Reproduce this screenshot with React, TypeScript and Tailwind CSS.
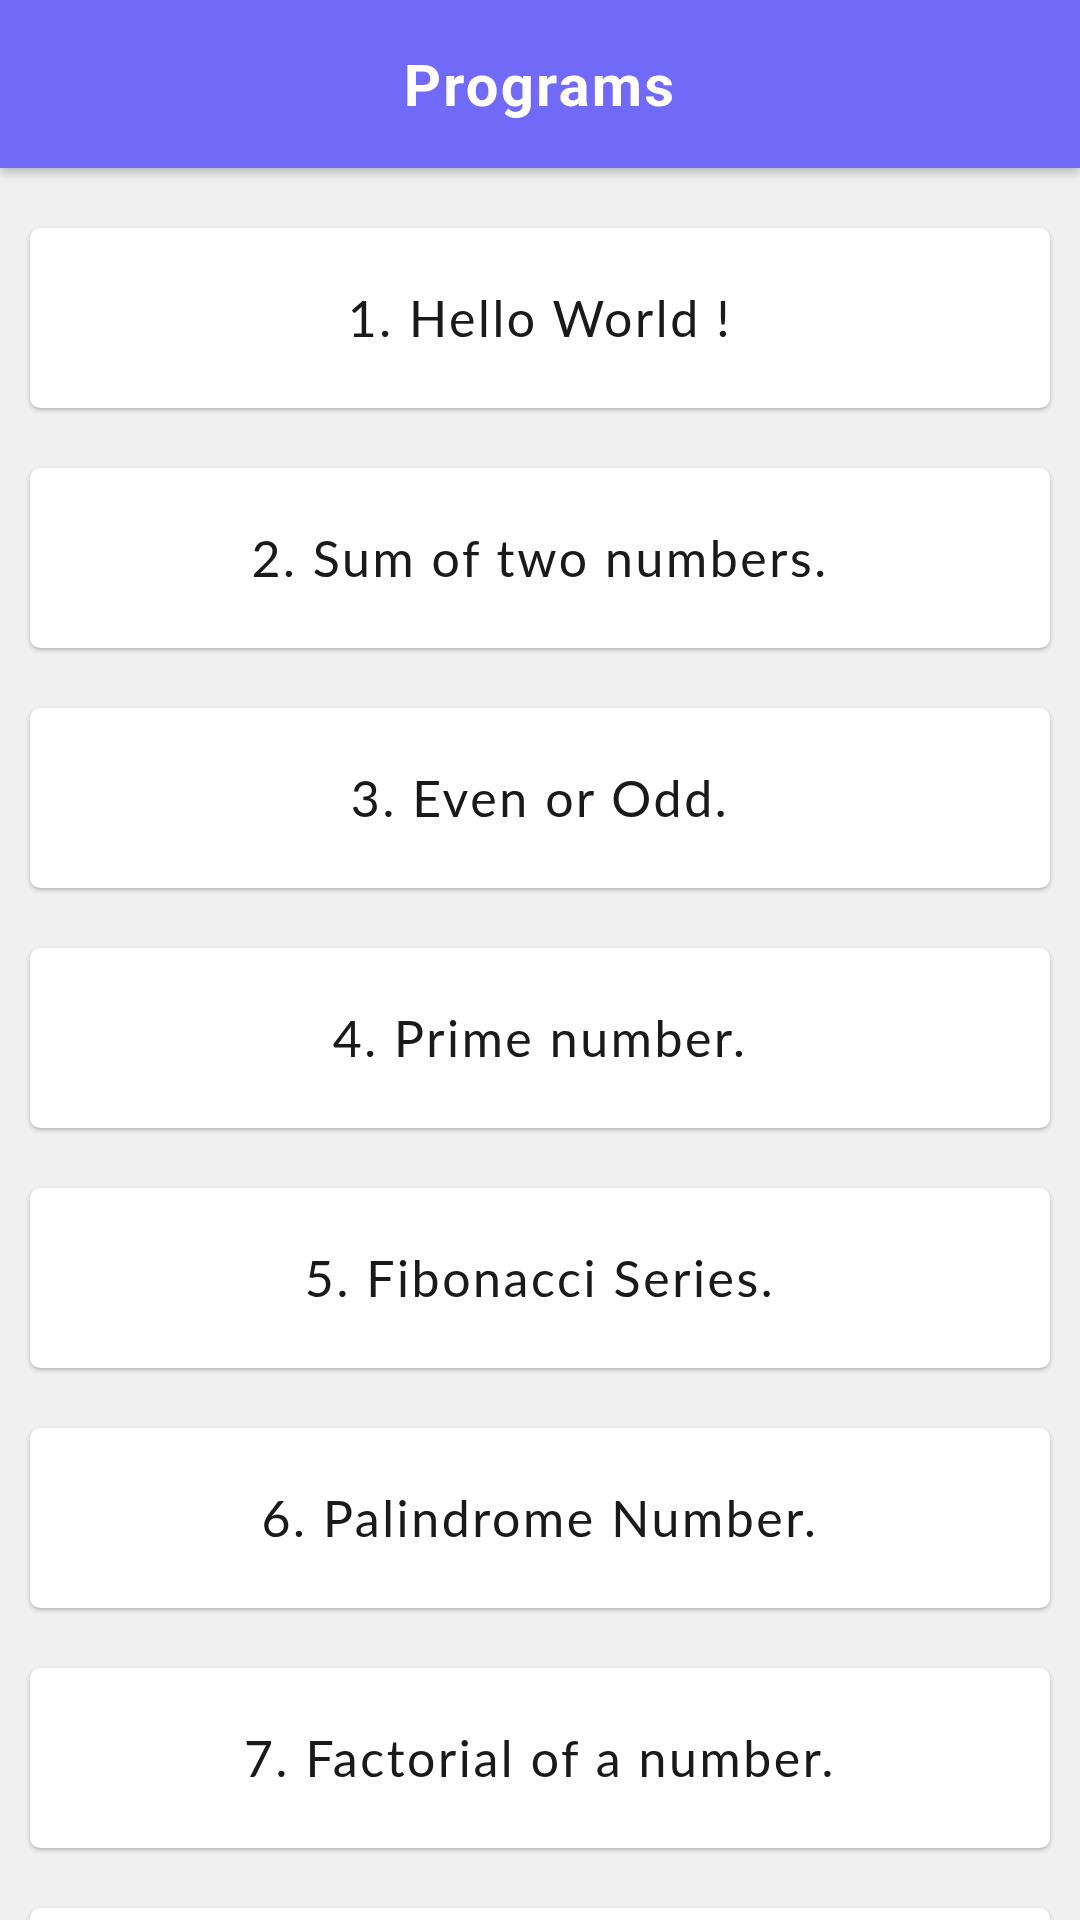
const programs = [
  '1. Hello World !',
  '2. Sum of two numbers.',
  '3. Even or Odd.',
  '4. Prime number.',
  '5. Fibonacci Series.',
  '6. Palindrome Number.',
  '7. Factorial of a number.',
  '8. Reverse a number.',
];

export default function App() {
  return (
    <div className="flex h-[1920px] w-[1080px] flex-col overflow-hidden bg-[#f0f0f0]">
      <header className="relative z-10 flex h-[168px] shrink-0 items-center justify-center bg-[#7169f8] pt-[4px] shadow-[0_4px_10px_rgba(0,0,0,0.25)]">
        <h1 className="font-['Roboto',sans-serif] text-[58px] font-bold tracking-[2.2px] text-white">
          Programs
        </h1>
      </header>

      <div className="flex flex-col gap-[60px] px-[30px] pt-[60px]">
        {programs.map((name) => (
          <div
            key={name}
            className="flex h-[180px] shrink-0 items-center justify-center rounded-[10px] bg-white shadow-[0_2px_4px_rgba(0,0,0,0.25)]"
          >
            <span className="font-['Lato',sans-serif] text-[50px] tracking-[2.6px] text-[#1a1a1a]">
              {name}
            </span>
          </div>
        ))}
      </div>
    </div>
  );
}
